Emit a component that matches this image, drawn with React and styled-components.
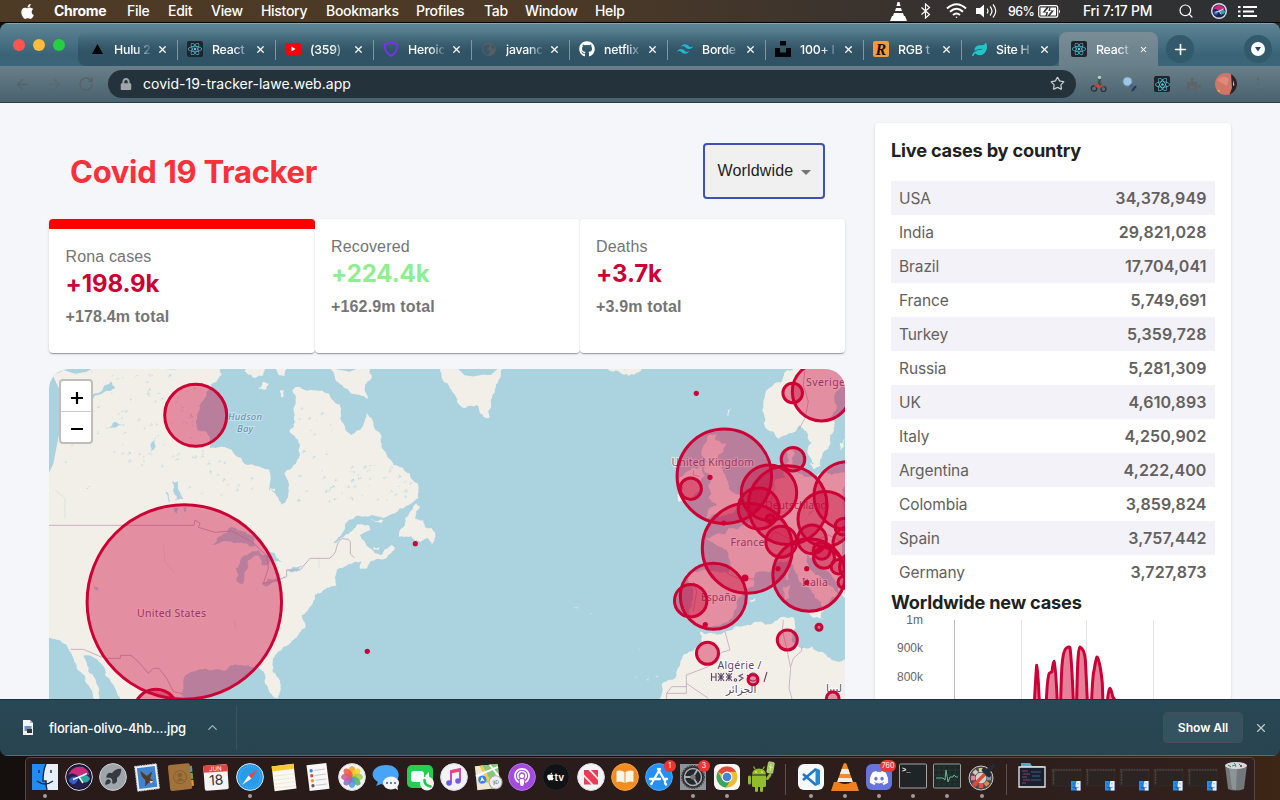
import React from "react";
import styled, { createGlobalStyle, css } from "styled-components";
import {
  FaApple, FaReact, FaGithub, FaDiscord,
  FaLock, FaLeaf, FaPuzzlePiece, FaPodcast, FaBookOpen,
} from "react-icons/fa";
import { SiTailwindcss, SiUnsplash } from "react-icons/si";
import { ArrowLeft, ArrowRight, RotateCw, Search, Star, Plus, X, ChevronUp, Rocket } from "lucide-react";

const sans = `Inter, "Liberation Sans", sans-serif`;
const helv = `"Liberation Sans", Arial, sans-serif`;

const GlobalStyle = createGlobalStyle`
  * { box-sizing: border-box; }
  body { margin: 0; background: #000; overflow: hidden; font-family: ${sans}; }
`;

const Desktop = styled.div`
  width: 1280px;
  height: 800px;
  overflow: hidden;
  display: flex;
  flex-direction: column;
  background: linear-gradient(90deg, #15100e, #0e0b0a 50%, #3d2615);
`;

/* ---------- menu bar ---------- */
const MenuBar = styled.div`
  height: 23px;
  flex: none;
  display: flex;
  align-items: center;
  color: #fff;
  font-size: 14px;
  font-weight: 500;
  letter-spacing: -0.3px;
  background: linear-gradient(90deg, #4e3b26, #4b3927 45%, #353130 75%, #2c3032);
  border-bottom: 1px solid #050607;
  padding-left: 19px;
`;
const AppleMark = styled.div`
  width: 35px;
  display: flex;
  font-size: 17px;
`;
const MenuItem = styled.span`
  width: ${(p) => p.$w}px;
  flex: none;
  white-space: nowrap;
  margin-top: -2px;
  font-weight: ${(p) => (p.$bold ? 700 : 500)};
`;
const StatusSlot = styled.div`
  width: ${(p) => p.$w}px;
  flex: none;
  display: flex;
  align-items: center;
  white-space: nowrap;
  letter-spacing: ${(p) => p.$ls || 0}px;
  font-size: ${(p) => p.$size || 14}px;
`;

/* ---------- browser window ---------- */
const Window = styled.div`
  height: 733px;
  flex: none;
  display: flex;
  flex-direction: column;
  border-radius: 8px;
  overflow: hidden;
  background: #274653;
`;
const TabStrip = styled.div`
  height: 43px;
  flex: none;
  display: flex;
  align-items: stretch;
  border-top: 1px solid #86a5b1;
  background: linear-gradient(#5d8494, #3a6377 75%, #3b6679);
`;
const Lights = styled.div`
  width: 78px;
  display: flex;
  gap: 8px;
  padding: 15px 0 0 13px;
`;
const Light = styled.span`
  width: 12px;
  height: 12px;
  border-radius: 50%;
  background: ${(p) => p.$c};
`;
const Tabs = styled.div`
  display: flex;
  padding-top: 8px;
  width: 1080px;
`;
const TabRun = styled.div`
  display: flex;
  width: 981px;
  padding-left: 2px;
  border-radius: 8px 0 8px 8px;
  background: linear-gradient(rgba(45, 80, 98, 0), #305365 60%);
`;
const Tab = styled.div`
  width: 98px;
  flex: none;
  display: flex;
  align-items: center;
  padding: 0 10px 0 9px;
  color: #fff;
  position: relative;
  ${(p) =>
    p.$active
      ? css`
          width: 99px;
          padding: 0 10px 0 12px;
          background: linear-gradient(#788d96, #697f89);
          border-radius: 8px 8px 0 0;
        `
      : css`
          &::after {
            content: "";
            position: absolute;
            right: 0;
            top: 8px;
            width: 1px;
            height: 20px;
            background: ${p.$last ? "transparent" : "#7f97a2"};
          }
        `}
`;
const Favicon = styled.span`
  width: 16px;
  height: 16px;
  flex: none;
  display: flex;
  align-items: center;
  justify-content: center;
  color: ${(p) => p.$c || "#fff"};
  background: ${(p) => p.$bg || "transparent"};
  font-size: ${(p) => p.$s || 16}px;
  border-radius: 2px;
`;
const TabTitle = styled.span`
  width: 36px;
  flex: none;
  margin: 0 7px 0 9px;
  white-space: nowrap;
  font-size: 12.3px;
  letter-spacing: -0.2px;
  font-weight: 500;
  -webkit-mask-image: linear-gradient(90deg, #000 60%, rgba(0, 0, 0, 0.15) 100%);
  mask-image: linear-gradient(90deg, #000 60%, rgba(0, 0, 0, 0.15) 100%);
`;
const RoundButton = styled.span`
  width: 28px;
  height: 28px;
  border-radius: 50%;
  margin: 11px 0 0 ${(p) => p.$ml}px;
  display: flex;
  align-items: center;
  justify-content: center;
  color: #fff;
  background: #335a6b;
`;
const Toolbar = styled.div`
  height: 37px;
  flex: none;
  display: flex;
  align-items: center;
  background: linear-gradient(#697f89, #49626e);
  border-bottom: 1px solid #263f4b;
  color: #5d686e;
`;
const NavIcon = styled.span`
  width: 32px;
  display: flex;
  padding-left: 14px;
  color: ${(p) => p.$c};
`;
const Omnibox = styled.div`
  width: 968px;
  height: 28px;
  margin-left: 12px;
  border-radius: 14px;
  background: #24333b;
  display: flex;
  align-items: center;
  padding: 0 11px 1px 12px;
  color: #fff;
  font-size: 14px;
`;
const Url = styled.span`
  flex: 1;
  margin-left: 11px;
  letter-spacing: 0.02px;
`;
const Ext = styled.span`
  width: 32px;
  flex: none;
  display: flex;
  justify-content: center;
`;
const Extensions = styled.div`
  display: flex;
  align-items: center;
  margin-left: 6px;
`;
const Avatar = styled.span`
  width: 22px;
  height: 22px;
  border-radius: 50%;
  overflow: hidden;
  display: flex;
`;

/* ---------- tracker page ---------- */
const Page = styled.main`
  height: 596px;
  flex: none;
  overflow: hidden;
  display: flex;
  align-items: flex-start;
  gap: 30px;
  padding: 20px 49px 0;
  background: #f5f6fa;
`;
const LeftColumn = styled.section`
  width: 796px;
`;
const Header = styled.header`
  height: 96px;
  display: flex;
  align-items: center;
  justify-content: space-between;
  padding: 0 20px 0 21px;
`;
const Title = styled.h1`
  margin: 2px 0 0;
  color: #fc3038;
  font: 700 31px/38px ${sans};
  letter-spacing: -0.3px;
`;
const Select = styled.div`
  width: 122px;
  height: 56px;
  border: 2px solid #3f51b5;
  border-radius: 4px;
  background: #f0f0f0;
  display: flex;
  align-items: center;
  padding-left: 12.5px;
  gap: 8px;
  color: #222;
  font: 16px ${helv};
  letter-spacing: 0.15px;
`;
const Caret = styled.span`
  border: 5px solid transparent;
  border-top-color: #757575;
  border-bottom: 0;
  margin-top: 2px;
`;
const Stats = styled.div`
  display: flex;
  height: 134px;
`;
const StatCard = styled.article`
  flex: 1;
  background: #fff;
  border-radius: 4px;
  padding: 16px;
  ${(p) => p.$selected && css`flex: 0 0 266px; padding-left: 16.5px;`}
  border-top: ${(p) => (p.$selected ? "10px solid red" : "0")};
  box-shadow: 0 2px 1px -1px rgba(0, 0, 0, 0.2), 0 1px 1px rgba(0, 0, 0, 0.14), 0 1px 3px rgba(0, 0, 0, 0.12);
`;
const StatLabel = styled.p`
  margin: 0;
  color: #757575;
  font: 16px/24px ${helv};
  letter-spacing: 0.15px;
`;
const StatValue = styled.h2`
  margin: 0;
  height: 36px;
  padding-top: 1px;
  color: ${(p) => p.$c};
  font: 700 24px/28px ${sans};
  letter-spacing: -0.1px;
`;
const StatTotal = styled.p`
  margin: 0;
  color: #757575;
  font: 700 16px/24px ${helv};
  letter-spacing: 0.15px;
`;
const MapFrame = styled.div`
  position: relative;
  margin-top: 16px;
  height: 500px;
  border-radius: 20px;
  overflow: hidden;
  background: #aad3df;
  svg { display: block; }
`;
const ZoomControl = styled.div`
  position: absolute;
  left: 10px;
  top: 10px;
  width: 34px;
  border: 2px solid #c0bebb;
  border-radius: 4px;
  background: #fff;
  overflow: hidden;
`;
const ZoomButton = styled.div`
  height: 30px;
  display: flex;
  align-items: center;
  justify-content: center;
  padding: 4px 0 0 1px;
  color: #000;
  & + & { height: 31px; border-top: 1px solid #ccc; }
`;
const SideCard = styled.aside`
  width: 356px;
  height: 700px;
  flex: none;
  background: #fff;
  border-radius: 4px;
  padding: 15px 16px;
  box-shadow: 0 2px 1px -1px rgba(0, 0, 0, 0.2), 0 1px 1px rgba(0, 0, 0, 0.14), 0 1px 3px rgba(0, 0, 0, 0.12);
`;
const SideTitle = styled.h3`
  margin: 0;
  color: #212121;
  font: 700 18.2px/24px ${sans};
  letter-spacing: -0.2px;
`;
const Table = styled.div`
  margin: 19px 0 1px;
`;
const Row = styled.div`
  height: 34px;
  display: flex;
  justify-content: space-between;
  align-items: center;
  padding: 0 9px 0 8px;
  color: #636060;
  font-size: 15.5px;
  letter-spacing: -0.1px;
  &:nth-child(odd) { background: #f3f2f8; }
  strong { font-weight: 600; font-size: 16px; letter-spacing: 0.1px; margin-right: -0.5px; }
`;

/* ---------- downloads shelf ---------- */
const Shelf = styled.div`
  flex: 1;
  display: flex;
  align-items: center;
  background: linear-gradient(#284856, #28444f);
  border-top: 1px solid #1c323c;
  border-bottom: 1px solid #49707f;
  color: #fff;
  font-weight: 500;
  padding: 2px 12px 2px 22px;
`;
const FileName = styled.span`
  width: 137px;
  flex: none;
  margin: 0 19px 0 15px;
  font-size: 13px;
  white-space: nowrap;
  letter-spacing: -0.16px;
`;
const ShelfRule = styled.span`
  width: 1px;
  height: 44px;
  margin-left: 16px;
  background: #3c535d;
`;
const ShowAll = styled.span`
  width: 80px;
  height: 31px;
  margin: 0 11px 0 auto;
  border: 1px solid #4a4e53;
  border-radius: 4px;
  background: #355260;
  display: flex;
  align-items: center;
  justify-content: center;
  font-size: 12.2px;
  font-weight: 600;
  letter-spacing: -0.1px;
`;

/* ---------- dock ---------- */
const Dock = styled.div`
  width: 1230px;
  height: 44px;
  margin: 1px 0 0 25px;
  padding-left: 2px;
  flex: none;
  display: flex;
  border: 1px solid #534847;
  border-bottom: 0;
  border-radius: 5px 5px 0 0;
  background: linear-gradient(90deg, #271a19, #2b1d1b 60%, #32201c);
`;
const DockSlot = styled.div`
  width: 34.1px;
  flex: none;
  position: relative;
  display: flex;
  flex-direction: column;
  align-items: center;
  padding-top: 5px;
  svg { display: block; overflow: visible; }
`;
const RunningDot = styled.i`
  width: 4px;
  height: 4px;
  margin-top: 3px;
  border-radius: 50%;
  background: #a19c9b;
`;
const Badge = styled.span`
  position: absolute;
  right: 0;
  top: 2px;
  min-width: 12px;
  height: 12px;
  padding: 0 2px;
  border-radius: 6px;
  background: #ec3535;
  color: #fff;
  font-size: 7px;
  line-height: 12px;
  text-align: center;
`;
const DockRule = styled.span`
  width: 1px;
  height: 31px;
  margin: 6px 8px 0 7px;
  background: #5d5250;
`;

/* ---------- map ---------- */
const random = (seed) => () => {
  seed = (seed * 16807) % 2147483647;
  return seed / 2147483647;
};

// Splits every coast segment with small offsets so that the shore looks rugged.
function coast(text, rough = 0.16) {
  let pts = text.trim().split(/\s+/).map((p) => p.split(",").map(Number));
  const rnd = random(77);
  for (let k = 0; k < 3; k++) {
    const out = [];
    pts.forEach(([x, y], i) => {
      const [nx, ny] = pts[(i + 1) % pts.length];
      const o = (rnd() - 0.5) * 2 * rough;
      out.push([x, y], [(x + nx) / 2 + (ny - y) * o, (y + ny) / 2 - (nx - x) * o]);
    });
    pts = out;
  }
  return "M" + pts.map((p) => p.map((n) => n.toFixed(1)).join(",")).join("L") + "Z";
}

const WEST_LAND = [
  "0,-20 250,-20 530,-20 530,30 515,50 490,75 470,110 455,150 457,195 480,198 495,250 540,246 570,270 600,297 650,308 670,312 672,375 690,385 710,420 722,410 730,385 718,325 740,310 762,280 765,240 750,215 733,200 750,170 745,130 742,75 760,65 800,75 850,85 885,120 885,160 900,190 920,210 945,195 965,140 985,170 1010,215 1025,270 1045,300 1075,310 1095,325 1120,360 1120,400 1080,425 1050,445 980,450 930,455 900,485 865,535 900,510 935,480 970,480 975,495 945,510 960,530 975,550 990,565 1010,570 1040,540 1050,550 1030,570 990,585 965,610 945,610 950,590 930,590 905,602 875,615 870,640 875,662 845,668 810,690 800,720 785,740 770,750 780,790 750,820 715,845 690,870 682,900 695,935 707,970 700,1000 685,995 668,965 660,930 640,905 610,900 570,898 545,915 480,910 440,920 415,945 410,985 415,1040 260,1040 215,980 180,930 150,880 115,873 130,920 160,965 185,1030 160,1030 130,960 95,910 75,860 65,840 40,825 0,810",
  "850,0 975,0 980,40 960,60 970,105 940,90 900,70 870,40",
  "1115,415 1125,425 1110,460 1135,465 1140,485 1160,490 1172,515 1160,540 1150,520 1125,530 1100,515 1062,515 1080,480 1095,440",
  "640,70 655,50 675,55 660,75", "705,75 716,75 718,95 708,97", "675,368 690,372 692,380 676,376",
  "600,0 670,0 655,30 630,40 600,20", "685,0 730,0 720,35 700,30", "975,460 1015,465 1010,476 990,470", "985,545 1005,548 1000,556 985,553",
];
const EAST_LAND = [
  "-10,0 180,0 165,40 150,80 138,120 135,155 125,160 105,145 95,120 60,130 30,90 10,60 -10,30",
  "485,0 490,14 520,18 550,32 580,22 592,0",
  "1060,0 1010,50 985,60 960,90 958,150 970,195 1000,222 1040,205 1065,180 1085,200 1090,270 1110,305 1130,280 1150,250 1165,200 1160,160 1175,130 1168,90 1190,65 1230,60 1230,0",
  "1185,235 1198,222 1198,245 1186,256", "850,135 858,128 852,155 846,150", "1095,295 1125,285 1128,305 1105,312",
  "790,210 820,200 812,225 843,235 835,260 815,285 830,310 850,350 860,380 885,390 893,405 880,430 850,445 800,450 775,465 790,435 815,420 790,400 800,385 790,360 800,340 780,320 785,290 770,270 775,240",
  "740,310 770,305 780,330 765,350 768,380 745,395 700,410 697,390 715,370 700,350 715,330",
  "1040,240 1050,265 1040,300 1060,325 1090,335 1130,325 1160,330 1230,320 1230,800 1200,700 1180,660 1150,620 1110,580 1085,570 1085,590 1110,630 1150,660 1185,700 1160,695 1145,730 1130,745 1128,710 1100,680 1070,655 1050,620 1035,590 1000,590 975,620 940,620 925,640 925,665 900,680 880,700 875,730 850,770 800,785 775,790 740,765 732,740 745,700 730,650 720,630 760,620 850,625 852,580 845,555 800,530 780,520 800,515 840,510 850,490 900,480 940,440 960,400 990,345 1020,340 1030,290 1025,260",
  "1015,665 1035,660 1035,700 1018,705", "1022,620 1034,612 1033,645 1022,645", "1080,735 1128,738 1133,765 1100,755",
  "915,705 930,700 932,708 918,712",
  "765,800 790,805 840,800 870,785 930,770 990,768 1045,757 1050,790 1040,825 1070,850 1130,860 1160,885 1230,905 1230,1040 600,1040 650,960 690,940 705,900 715,870 750,850 770,830",
  "605,945 612,935 610,948", "632,935 640,925 638,938", "384,728 400,724 398,731", "432,744 444,744 440,748", "578,850 586,852 582,855", "570,935 574,935 573,944",
];
const WEST_LAKES = [
  "500,540 520,515 560,485 600,500 630,515 630,545 600,535 560,530",
  "575,650 572,610 590,575 620,560 640,555 675,575 670,600 650,600 640,570 610,585 600,620 595,655",
  "650,655 670,640 700,640 720,635 700,650 665,665", "655,545 690,565 710,590 690,590 670,570",
  "725,615 745,605 772,600 760,618 735,622", "380,350 400,350 415,400 400,405 385,380", "385,425 400,428 398,448 388,440", "362,375 370,385 378,410 370,410",
  "145,655 160,670 160,682 148,670", "310,270 318,235 332,215 330,250", "180,190 210,170 240,180 205,188", "140,90 180,60 200,50 210,70 160,90 140,105",
  "415,425 425,427 424,445 418,440", "120,372 135,360 128,372",
];

function lakes(seed, count, x0, y0, w, h) {
  const r = random(seed);
  return Array.from({ length: count }, (_, i) => {
    const x = x0 + r() * w, y = y0 + r() * h, a = 2 + r() * 8, b = 1 + r() * 4;
    return <path key={i} d={coast(`${x},${y} ${x + a},${y - b} ${x + a + b},${y + 1} ${x + a * 0.4},${y + b}`, 0.5)} />;
  });
}

const CIRCLES = [
  [195.7, 415.3, 31], [184.3, 602, 97.2], [156, 711, 21.8], [792.7, 393, 9.8], [821.5, 391.7, 29.2], [724.3, 476.3, 47.2],
  [690.7, 488.7, 10.7], [793, 459.2, 11.8], [769, 492.7, 27.7], [787.7, 505.2, 39.4], [758.7, 508.5, 20.5], [770.3, 518.7, 4],
  [747.3, 548.2, 45], [848, 495.7, 34], [825.5, 519, 27.5], [781.3, 541.7, 15.5], [812, 539.4, 14.3], [821.7, 550.7, 8.5],
  [824, 557.7, 10.5], [843.3, 526.7, 8.3], [850, 543.3, 17], [838.3, 566.7, 7.2], [853, 567, 13.5], [844, 582.3, 6],
  [809, 575, 36.2], [745, 578, 2], [713.3, 596.3, 33], [690.7, 600.7, 16.2], [707.5, 653.3, 11], [787.3, 640, 10],
  [819, 627.3, 3], [753, 679.7, 5], [832.7, 698.3, 6.3],
];
const DOTS = [
  [415.3, 543.7], [367.3, 651.3], [696.3, 393.3], [710, 477.3], [723.7, 523], [778, 568.7], [806.7, 568.7], [806.7, 582.7], [705.3, 624.7], [745, 578],
];
const LABELS = [
  ["United States", 137, 617, 69], ["United Kingdom", 671.5, 466, 82.5], ["Sverige", 806, 386, 39], ["Deutschland", 765, 509, 62],
  ["France", 730.5, 546, 34], ["España", 701, 601, 35.5], ["Italia", 802, 586, 26],
];

function WorldMap() {
  return (
    <svg width="796" height="500" viewBox="49 369 796 500">
      <g transform="translate(45 365) scale(.33333)" fill="#f2efe9">
        {WEST_LAND.map((d, i) => <path key={i} d={coast(d)} />)}
        <g fill="#aad3df">
          {WEST_LAKES.map((d, i) => <path key={i} d={coast(d)} />)}
          {lakes(11, 45, 200, 25, 270, 300)}
          {lakes(45, 18, 60, 70, 240, 240)}
          {lakes(23, 26, 380, 270, 240, 150)}
          {lakes(91, 48, 755, 300, 340, 110)}
          {lakes(32, 12, 760, 130, 110, 150)}
          {lakes(8, 18, 15, 15, 330, 80)}
        </g>
        <g fill="none" stroke="#bfa5bd" strokeWidth="2.6" strokeLinejoin="round">
          <path d="M0 481H447L450 465L465 475L460 487L510 502L560 498L620 530L665 572L670 610L655 655L685 650L725 635V615H765L795 580H853Q872 570 875 545Q885 515 900 522Q912 520 916 530V567L928 578" />
          <path d="M77 853H115L167 875L185 880H226V871H258L280 890L310 925L325 910H342L365 940L385 980L413 986" />
          <path d="M355 540L360 590L390 626M568 762L572 790M30 375L60 400V460M822 582V610" stroke="#d5dcdb" strokeWidth="2" />
        </g>
      </g>
      <g transform="translate(445 365) scale(.33333)" fill="#f2efe9">
        {EAST_LAND.map((d, i) => <path key={i} d={coast(d, 0.18)} />)}
        <g fill="none" stroke="#bfa5bd" strokeWidth="2.4">
          <path d="M1080 12L1075 60L1090 110L1080 160L1062 192M840 800L855 855L830 862L790 905L724 930V985H665V1005M724 955L790 1000M665 985L680 965H724" />
          <path d="M1015 765L1012 795L1025 850L1037 910L1032 970L1042 1005M1070 845V858L1045 880L1037 905" />
          <path d="M845 625L880 640L925 642M745 650L755 680L745 740M745 315V330L765 335M960 540L990 500L1030 520L1050 560M1090 450L1120 420L1150 450M1100 530L1150 510L1190 530M1160 540L1190 580M900 440L960 470L975 500M990 360L975 420" />
        </g>
      </g>
      <g fontFamily='"Noto Sans", sans-serif' fontSize="10.5" fill="#7b5a81" stroke="#fff" strokeOpacity=".65" strokeWidth="2" paintOrder="stroke">
        {LABELS.map(([t, x, y, w]) => <text key={t} x={x} y={y} textLength={w}>{t}</text>)}
        <g fill="#5c8ab4" fontSize="9.5" fontStyle="italic" strokeOpacity=".35">
          <text x="228" y="420" textLength="34">Hudson</text>
          <text x="237" y="432" textLength="16">Bay</text>
        </g>
        <g fill="#5f4668" strokeOpacity=".9">
          <text x="717.5" y="668.5" textLength="44">Algérie /</text>
          <g fill="none" stroke="#5f4668" strokeWidth="1.1" strokeOpacity="1">
            <path d="M711.5 673V681M716 673V681M711.5 677H716M718 673L724 681M724 673L718 681M721 673V681M718 677H724M726 673L732 681M732 673L726 681M729 673V681M726 677H732M743 674L739 676L743 678L739 681M747 675L750 678M764 682L767 672" />
            <circle cx="735.5" cy="680" r="1.2" />
            <circle cx="753" cy="677" r="4" />
          </g>
          <text x="726" y="692.5" fontFamily='"DejaVu Sans"'>الجزائر</text>
          <text x="826" y="692" fontFamily='"DejaVu Sans"'>ليبيا</text>
        </g>
      </g>
      <g fill="#cc0034" fillOpacity=".4" stroke="#cc0034" strokeWidth="3">
        {CIRCLES.map(([x, y, r], i) => <circle key={i} cx={x} cy={y} r={r} />)}
      </g>
      <g fill="#cc0034">
        {DOTS.map(([x, y], i) => <circle key={i} cx={x} cy={y} r="2.6" />)}
      </g>
    </svg>
  );
}

const ChartSvg = styled.svg`
  display: block;
`;

function CasesChart() {
  return (
    <ChartSvg width="324" height="96" viewBox="891 614 324 96">
      <g stroke="#e4e4e4">
        <path d="M954.5 620V710" stroke="#bcbcbc" />
        <path d="M1021.5 620V710M1086.5 620V710M1153.5 620V710" />
      </g>
      <g fontFamily={helv} fontSize="12" fill="#666" textAnchor="end">
        <text x="923" y="624">1m</text>
        <text x="923" y="652">900k</text>
        <text x="923" y="681">800k</text>
      </g>
      <g transform="translate(860 400) scale(.33333)" fill="#e5809a" stroke="#cc0034" strokeWidth="9" strokeLinejoin="round">
        <path d="M521 950Q527 830 530 796Q534 800 540 950M557 950Q561 830 568 820L576 815Q579 785 582 784Q587 790 594 950M601 950C604 800 606 755 618 745Q627 738 630 743C636 790 638 850 642 950M649 950C652 790 654 745 660 741C668 745 674 755 676 780Q680 850 684 950M693 950Q697 830 702 812Q708 775 711 771C718 780 724 820 727 850L730 950M739 950Q744 865 750 865Q754 868 758 890L768 905" />
      </g>
    </ChartSvg>
  );
}

/* ---------- dock drawings, each on a 28 by 28 grid ---------- */
const Face = ({ s = 26 }) => (
  <svg width={s} height={s} viewBox="0 0 26 26">
    <path fill="#1f8df5" d="M0 0h26v26H0z" />
    <path fill="#e9eff6" d="M14 0h12v26H15q-1-5-1-9h-3Q11 7 14 0z" />
    <path fill="none" stroke="#182b44" strokeWidth="1.4" d="M7 6v3M19 6v3M5 17q8 6 16 0M14 0q-3 7-3 17h3q0 5 1 9" />
  </svg>
);
const Disc = ({ fill, ring = "#d8dbe0", children }) => (
  <svg width="28" height="28" viewBox="0 0 28 28">
    <circle cx="14" cy="14" r="13.4" fill={fill} stroke={ring} strokeWidth="1" />
    {children}
  </svg>
);
const Board = ({ children, turn = 0 }) => (
  <svg width="28" height="28" viewBox="0 0 28 28"><g transform={`rotate(${turn} 14 14)`}>{children}</g></svg>
);

const SiriSwirl = () => (
  <>
    <circle cx="14" cy="14" r="11.5" fill="#25204d" />
    <path d="M3 12Q8 2 18 4Q24 8 24 12Q18 9 14 14Q8 8 3 12z" fill="#c92b78" />
    <path d="M14 14Q22 9 25 16Q20 24 14 14z" fill="#2dbfb4" fillOpacity=".85" />
    <path d="M14 14Q5 12 4 18Q10 26 14 14z" fill="#376ce0" fillOpacity=".85" />
    <path d="M8 16.500Q14 14 22 10.500M14 14L18 20" stroke="#e6f7ff" strokeWidth="1.600" fill="none" />
  </>
);
const MiniWindow = () => (
  <svg width="30" height="28" viewBox="0 0 30 28">
    <path fill="#2c2422" stroke="#38302e" strokeWidth=".6" d="M1 6h29v17H1z" />
    <path stroke="#4c4442" strokeWidth="1.600" strokeDasharray="2 .7" d="M1 7h29M2.500 8v14" />
    <g transform="translate(20 18)"><Face s={9.5} /></g>
  </svg>
);
const petals = ["#f6a323", "#f5d32c", "#a9cf46", "#55b46a", "#4e9ed5", "#8b70c4", "#cf5a9c", "#ed5b4b"];
const ticks = ["#cfcf9a", "#8fae8a", "#7f9a98", "#e08a50", "#e05050", "#d9487a", "#e3809a", "#d8c8b8"];

const DOCK = [
  { key: "finder", run: 1, art: <Board><g transform="translate(1 1)"><Face /></g></Board> },
  { key: "siri", art: <Disc fill="#15152c"><SiriSwirl /></Disc> },
  { key: "launchpad", art: <Disc fill="#9fa6ab" ring="#c8ced1"><g transform="translate(5 5)"><Rocket size={18} color="#363b40" fill="#363b40" /></g></Disc> },
  { key: "mail", art: <Board turn={-7}><path fill="#eef2f5" d="M3 2h22v25H3z" stroke="#ccc" strokeDasharray="1.500 1" /><path fill="#4084cf" d="M5 4h18v21H5z" /><path fill="#583922" d="M8 7l6 6 6-4-3 7 3 3-5 1-4 3 1-6-3-4z" /><path fill="#e8dfc9" d="M16 18l4 1-3 2z" /></Board> },
  { key: "contacts", art: <Board turn={-6}><path fill="#4aa0c0" d="M20 4h6v6h-6z" /><path fill="#65ac49" d="M20 11h6v6h-6z" /><path fill="#df9a33" d="M20 18h6v6h-6z" /><rect x="2" y="1" width="22" height="26" rx="2" fill="#a2723c" /><circle cx="13" cy="14" r="6.500" fill="none" stroke="#86602f" /><circle cx="13" cy="12" r="2.400" fill="#86602f" /><path d="M9 18q4-6 8 0z" fill="#86602f" /></Board> },
  { key: "calendar", art: <Board turn={-4}><rect x="2" y="2" width="24" height="25" rx="2" fill="#f5f5f5" /><path fill="#e4433f" d="M2 2h24v7H2z" /><text x="14" y="7.800" fill="#fff" fontSize="6" textAnchor="middle">JUN</text><text x="14" y="22" fill="#333" fontSize="14" textAnchor="middle">18</text></Board> },
  { key: "safari", run: 1, art: <Disc fill="#279cea" ring="#dfe4e8"><circle cx="14" cy="14" r="10.500" fill="none" stroke="#7fcaf6" strokeDasharray=".6 1.500" /><path fill="#f0443a" d="M22 6L15.500 15.500 12.500 12.500z" /><path fill="#f3f3f3" d="M6 22L15.500 15.500 12.500 12.500z" /></Disc> },
  { key: "notes", art: <Board turn={-7}><path fill="#faf8ef" d="M3 2h22v25H3z" /><path fill="#f7ca35" d="M3 2h22v5H3z" /><path stroke="#e6e3d8" strokeWidth=".7" d="M3 12h22M3 16h22M3 20h22M3 24h22" /></Board> },
  { key: "reminders", art: <Board turn={-7}><path fill="#f7f7f7" d="M4 1h20v26H4z" /><path stroke="#c8c8c8" d="M11 7h11M11 12h11M11 17h11M11 22h11" /><circle cx="8" cy="7" r="1.700" fill="#3984ef" /><circle cx="8" cy="12" r="1.700" fill="#e9493e" /><circle cx="8" cy="17" r="1.700" fill="#f39b36" /><circle cx="8" cy="22" r="1.700" fill="#675a5c" /></Board> },
  { key: "photos", art: <Disc fill="#f3f3f2">{petals.map((c, i) => <ellipse key={c} cx="14" cy="8.500" rx="3.500" ry="5.500" fill={c} fillOpacity=".88" transform={`rotate(${i * 45} 14 14)`} />)}</Disc> },
  { key: "messages", art: <Board><path fill="#48a4f7" d="M14 2c17 0 17 20 0 20q-3 0-5-1l-5 2 2-4C-4 13 1 2 14 2z" /><ellipse cx="19" cy="20" rx="8" ry="6.500" fill="#f1f5f9" /><path fill="#f1f5f9" d="M21 24l5 3-1-6z" /><path stroke="#345d91" strokeWidth="2" strokeLinecap="round" strokeDasharray="0 4" d="M15 20h9" /></Board> },
  { key: "facetime", art: <Board><rect x="1" y="2" width="26" height="23" rx="5" fill="#25ce50" /><rect x="5" y="8" width="13" height="11" rx="3" fill="#fff" /><path fill="#fff" d="M19 13l4-4v9z" /><circle cx="21" cy="20.500" r="7" fill="#f2f5f2" /><path d="M18.500 17q0 5.500 6 6.500" stroke="#2bc254" strokeWidth="2.600" fill="none" strokeLinecap="round" /></Board> },
  { key: "music", art: <Disc fill="#f3f3f6"><g fill="none" stroke="#c352c0" strokeWidth="2"><path d="M11 20V8l9-2v12" /><circle cx="9" cy="20" r="1.800" fill="#665de5" stroke="#665de5" /><circle cx="18" cy="18" r="1.800" fill="#765de5" stroke="#765de5" /><path d="M11 9l9-2" stroke="#ed476e" strokeWidth="3" /></g></Disc> },
  { key: "maps", art: <Board turn={-6}><path fill="#eee7d2" d="M2 2h23v24H2z" /><path fill="#83c97b" d="M10 2h15v8L12 20z" /><path stroke="#f8c852" strokeWidth="3" d="M8 2l10 24" /><path stroke="#fff" strokeWidth="2" d="M2 12l23-7M17 2l8 13" /><circle cx="8" cy="16" r="4" fill="#3a7fe0" /><path fill="#fff" d="M8 13l2.300 5L8 17l-2.300 1z" /><circle cx="21" cy="20" r="6.500" fill="#eef0f0" stroke="#aaa" /><text x="21" y="22" textAnchor="middle" fontSize="5" fill="#444">3D</text></Board> },
  { key: "podcasts", art: <Disc fill="#a34ae0" ring="#bb70ee"><foreignObject x="5" y="5" width="18" height="18"><FaPodcast size={18} color="#fff" /></foreignObject></Disc> },
  { key: "tv", art: <Disc fill="#111214" ring="#26282a"><foreignObject x="4" y="8.500" width="9" height="10"><FaApple size={9} color="#fff" /></foreignObject><text x="12.500" y="17.500" fontSize="10" fontWeight="600" fill="#fff">tv</text></Disc> },
  { key: "news", art: <Disc fill="#f3f4f6"><path fill="#ef3c56" d="M7 7h4.500L21 17v4.500h-4.500L7 11.500zM7 14l7.500 7.500H7zM14 7h7v7.500z" /></Disc> },
  { key: "books", art: <Disc fill="#f28d20" ring="#f6a144"><path fill="#fbf5e9" d="M5.500 8Q10 6.500 13.500 9v11Q10 17.500 5.500 19zM22.500 8Q18 6.500 14.500 9v11q3.500-2.500 8-1z" /></Disc> },
  { key: "appstore", badge: "1", art: <Disc fill="#2590f3" ring="#4da8f6"><path fill="none" stroke="#fff" strokeWidth="2.300" strokeLinecap="round" d="M15 6L8 18M13 6l7 12M5 16h10M19 16h3M7 20l-.7 1M20 20l1 1.500" /></Disc> },
  { key: "settings", badge: "3", run: 1, art: <Board><path fill="#8c949a" d="M1 1h26v26H1z" /><circle cx="14" cy="14" r="11" fill="#25282a" stroke="#444" strokeWidth="2" strokeDasharray="1.500 1" /><circle cx="14" cy="14" r="8.500" fill="none" stroke="#a8adb0" strokeWidth="1.500" /><path stroke="#a8adb0" strokeWidth="1.800" d="M14 14H5.500M14 14l4.500 7.500M14 14l4.500-7.500" /><circle cx="14" cy="14" r="2.600" fill="#777" /></Board> },
  { key: "chrome", run: 1, art: <Board><rect x="1" y="1" width="26" height="26" rx="6" fill="#f7f7f7" /><circle cx="14" cy="14" r="10.500" fill="#edbd35" /><path fill="#de4b3c" d="M14 14L4.900 8.800A10.500 10.500 0 0 1 23.100 8.800L14 9z" /><path fill="#3ca45c" d="M4.900 8.800A10.500 10.500 0 0 0 13 24.400l5-8-8.500.5z" /><circle cx="14" cy="14" r="5.400" fill="#fff" /><circle cx="14" cy="14" r="4.300" fill="#4285d8" /></Board> },
  { key: "android", art: <Board><g fill="#91bd2c"><path d="M5 11.500q.5-6 7-6t7 6z" /><path d="M5 12.500h14v10q0 1.500-1.500 1.500h-11Q5 24 5 22.500z" /><rect x="1" y="12.500" width="3" height="9" rx="1.500" /><rect x="8" y="22" width="3" height="7" rx="1.500" /><rect x="13" y="22" width="3" height="7" rx="1.500" /></g><path d="M8 6L6.500 3.500M16 6l1.500-2.500M20.500 15l3-3.500" stroke="#91bd2c" strokeWidth="1.200" /><path d="M20.500 15.500l2.500-3.500" stroke="#91bd2c" strokeWidth="3" strokeLinecap="round" /><circle cx="9" cy="9" r=".8" fill="#fff" /><circle cx="15" cy="9" r=".8" fill="#fff" /><rect x="20.500" y="-1" width="6" height="11" rx="1" transform="rotate(10 23 5)" fill="#a4c75b" stroke="#d9e7af" strokeWidth=".6" /><path d="M24 1l-1 7M22 3l2 2 2-1" stroke="#e6f0c8" fill="none" strokeWidth=".8" /></Board> },
  { key: "rule1", rule: 1 },
  { key: "code", run: 1, art: <Board><rect x="1" y="1" width="26" height="26" rx="6" fill="#f8f9fa" /><path fill="#2489d4" d="M18.500 5L23 7v14l-4.500 2z" /><path fill="none" stroke="#1f78c6" strokeWidth="2.600" strokeLinejoin="round" d="M19 6L6 17M19 22L6 11" /></Board> },
  { key: "vlc", run: 1, art: <Board><path fill="#f18b25" d="M12.500 1q1.500-2 3 0l6.500 18H6z" /><path fill="#f1eee9" d="M10.700 6h6.600l1.700 5H9zM7.500 15h13l1.200 4H6.300z" /><path fill="#ee7f1c" d="M3 19h4q7 4 14 0h4l3 9H0z" /></Board> },
  { key: "discord", badge: "760", run: 1, art: <Board><rect x="1" y="1" width="26" height="26" rx="6" fill="#6674dc" /><foreignObject x="4" y="5" width="21" height="20"><FaDiscord size={20} color="#fff" /></foreignObject></Board> },
  { key: "terminal", run: 1, art: <Board><rect x=".5" y="1" width="27" height="24" rx="1" fill="#212426" stroke="#a3a5a5" /><text x="3" y="9" fontSize="7" fontFamily="Liberation Mono" fontWeight="700" fill="#fff">&gt;_</text></Board> },
  { key: "activity", run: 1, art: <Board><rect x=".5" y="1" width="27" height="24" rx="1" fill="#1c2a27" stroke="#9b9d9d" /><path stroke="#31473f" strokeWidth=".5" d="M1 7h26M1 12h26M1 17h26M1 21h26M6 1v24M11 1v24M17 1v24M22 1v24" /><path fill="none" stroke="#62b894" d="M3 15h7l2 2 1-10 2 12 2-5h3l1-2 2 2h2" /></Board> },
  { key: "picker", run: 1, art: <Board><circle cx="13" cy="15" r="12" fill="#4a4a48" stroke="#c9c9c9" />{ticks.map((c, i) => <path key={c} stroke={c} strokeWidth="4.500" d="M13 5v4" transform={`rotate(${i * 45} 13 15)`} />)}<circle cx="13" cy="15" r="5.500" fill="#cfcfcf" /><path stroke="#e24832" strokeWidth="3.200" strokeLinecap="round" d="M6 22L17 11" /><path stroke="#202a3a" strokeWidth="4.500" strokeLinecap="round" d="M19 9l6-6M16 7l5 5" /></Board> },
  { key: "rule2", rule: 1 },
  { key: "folder", art: <Board><path fill="#5fa6c5" d="M3 0h9l2 3h11v5H3z" /><path fill="#19202e" stroke="#ececec" strokeWidth="1.300" d="M1 4h26v20H1z" /><path stroke="#8a4267" d="M4 8h6M5 11h7M4 14h5M5 17h7M4 20h4" /><path stroke="#3e5f85" d="M13 9h10M14 13h8M13 17h10" /></Board> },
  ...[1, 2, 3, 4, 5].map((n) => ({ key: "window" + n, art: <MiniWindow /> })),
  { key: "trash", art: <Board><path fill="#72787b" d="M3 2h22l-3 24q-8 3-16 0z" /><path fill="#a2a6a7" d="M7 4l3 22 4 1 1-23z" fillOpacity=".6" /><ellipse cx="14" cy="2.500" rx="11" ry="3.500" fill="#d5dada" /><path stroke="#2f8e94" strokeWidth="1" d="M10 3l3-1 1 2" fill="none" /><path stroke="#5a6063" d="M6 2l3 2M17 1l3 3M20 2l-2 2" /><path stroke="#c6564a" d="M12 0l2 2" /></Board> },
];

const MENUS = [["Chrome", 73, 1], ["File", 41], ["Edit", 43], ["View", 50], ["History", 65], ["Bookmarks", 90], ["Profiles", 68], ["Tab", 41], ["Window", 70], ["Help", 295]];

const TABS = [
  ["Hulu 2", <Favicon><svg width="11" height="10"><path d="M5.500 0L11 10H0z" fill="#050505" /></svg></Favicon>],
  ["React", <Favicon $bg="#20242b" $c="#58c4dc" $s={14}><FaReact /></Favicon>],
  ["(359)", <Favicon><svg width="16" height="12"><rect width="16" height="12" rx="2.500" fill="red" /><path d="M6.500 3.500v5l4-2.500z" fill="#fff" /></svg></Favicon>],
  ["Heroic", <Favicon $c="#7c2ff2"><svg width="18" height="18" viewBox="0 0 18 18"><path d="M9 1.200Q12.500 3.600 16 3.800Q17 12.500 9 16.800Q1 12.500 2 3.800Q5.500 3.600 9 1.200z" fill="none" stroke="currentColor" strokeWidth="2" /></svg></Favicon>],
  ["javanc", <Favicon><svg width="14" height="14"><circle cx="7" cy="7" r="7" fill="#555e63" /><path d="M2 4q4-3 6 0l-3 3 3 2-2 4q-5-1-5-7zM10 2l3 4-3 1z" fill="#39576a" /></svg></Favicon>],
  ["netflix", <Favicon><FaGithub /></Favicon>],
  ["Borde", <Favicon $c="#25b5d3"><SiTailwindcss /></Favicon>],
  ["100+ I", <Favicon $c="#050505"><SiUnsplash /></Favicon>],
  ["RGB t", <Favicon $bg="#fb9a35" $c="#111"><svg width="16" height="16"><text x="2.500" y="13.500" fontFamily="Liberation Serif" fontSize="16" fontWeight="700" fontStyle="italic" fill="#111">R</text></svg></Favicon>],
  ["Site H", <Favicon $c="#21c6c8" $s={15}><FaLeaf /></Favicon>],
];

const COUNTRIES = [
  ["USA", "34,378,949"], ["India", "29,821,028"], ["Brazil", "17,704,041"], ["France", "5,749,691"], ["Turkey", "5,359,728"], ["Russia", "5,281,309"],
  ["UK", "4,610,893"], ["Italy", "4,250,902"], ["Argentina", "4,222,400"], ["Colombia", "3,859,824"], ["Spain", "3,757,442"], ["Germany", "3,727,873"],
];

const STATS = [
  ["Rona cases", "+198.9k", "+178.4m total", "#cc0034", true],
  ["Recovered", "+224.4k", "+162.9m total", "lightgreen"],
  ["Deaths", "+3.7k", "+3.9m total", "#cc0034"],
];

function SystemBar() {
  return (
    <MenuBar>
      <AppleMark><FaApple /></AppleMark>
      {MENUS.map(([t, w, b]) => <MenuItem key={t} $w={w} $bold={b}>{t}</MenuItem>)}
      <StatusSlot $w={30}>
        <svg width="17" height="19" viewBox="0 0 17 19"><path fill="#fff" d="M7.500 0h2l1 4h-4zM6 6h5l1 3H5zM4 11h9l1 3H3zM2 14h13l2 5H0z" /></svg>
      </StatusSlot>
      <StatusSlot $w={26}>
        <svg width="12" height="16" viewBox="0 0 12 16"><path d="M1.500 4.500l8 7-4 3.500V1l4 3.500-8 7" fill="none" stroke="#fff" strokeWidth="1.200" /></svg>
      </StatusSlot>
      <StatusSlot $w={30}>
        <svg width="21" height="16" viewBox="0 0 21 16" fill="none" stroke="#fff" strokeWidth="2"><path d="M1 5.500q9.500-8.500 19 0M4 8.800q6.500-6 13 0M7 12q3.500-3 7 0" /><circle cx="10.500" cy="14.300" r=".8" fill="#fff" stroke="none" /></svg>
      </StatusSlot>
      <StatusSlot $w={32}>
        <svg width="22" height="16" viewBox="0 0 22 16"><path fill="#fff" d="M0 5h4l4-3.500v13L4 11H0z" /><path fill="none" stroke="#fff" strokeWidth="1.200" d="M11 5.500q2 2.500 0 5M14 3.500q4 4.500 0 9M17 1.500q5.500 6.500 0 13" /></svg>
      </StatusSlot>
      <StatusSlot $w={30} $size={12.4} $ls={-0.5}>96%</StatusSlot>
      <StatusSlot $w={45}>
        <svg width="23" height="13" viewBox="0 0 23 13"><rect x=".7" y=".7" width="19" height="11.500" rx="2" fill="none" stroke="#fff" strokeWidth="1.200" /><path fill="#fff" d="M2.500 2.500h6l-4 5h4l-1 3h-5zM12.500 2.500h5.500v8h-6l4-5h-4zM21 4.500q2 2 0 4z" /><path d="M11.500 1.500L7 7h3l-1 4.500L13.500 6h-3z" fill="#fff" /></svg>
      </StatusSlot>
      <StatusSlot $w={95} $size={13.8} $ls={-0.15}>Fri 7:17 PM</StatusSlot>
      <StatusSlot $w={33}><Search size={16} strokeWidth={1.8} /></StatusSlot>
      <StatusSlot $w={27}><svg width="16" height="16" viewBox="0 0 28 28"><circle cx="14" cy="14" r="14" fill="#d6dff1" /><SiriSwirl /></svg></StatusSlot>
      <StatusSlot $w={20}><svg width="19" height="13"><path stroke="#fff" strokeWidth="2" d="M0 2h2.500M5 2h14M0 6.500h2.500M5 6.500h11M0 11h2.500M5 11h14" /></svg></StatusSlot>
    </MenuBar>
  );
}

function BrowserTabs() {
  return (
    <TabStrip>
      <Lights><Light $c="#ff5550" /><Light $c="#febc3b" /><Light $c="#27ce41" /></Lights>
      <Tabs>
        <TabRun>
          {TABS.map(([t, icon], i) => (
            <Tab key={t} $last={i === 9}>{icon}<TabTitle>{t}</TabTitle><X size={13} strokeWidth={2.8} /></Tab>
          ))}
        </TabRun>
        <Tab $active><Favicon $bg="#20242b" $c="#58c4dc" $s={14}><FaReact /></Favicon><TabTitle>React</TabTitle><X size={13} strokeWidth={2.8} /></Tab>
      </Tabs>
      <RoundButton $ml={8}><Plus size={17} strokeWidth={2.3} /></RoundButton>
      <RoundButton $ml={50}>
        <svg width="14" height="14"><circle cx="7" cy="7" r="7" fill="#fff" /><path d="M4 5h6l-3 4.500z" fill="#294c5c" /></svg>
      </RoundButton>
    </TabStrip>
  );
}

function AddressBar() {
  return (
    <Toolbar>
      <NavIcon $c="#566268"><ArrowLeft size={17} /></NavIcon>
      <NavIcon $c="#596970"><ArrowRight size={17} /></NavIcon>
      <NavIcon $c="#566268"><RotateCw size={16} /></NavIcon>
      <Omnibox>
        <FaLock size={12} color="#a1a6ab" />
        <Url>covid-19-tracker-lawe.web.app</Url>
        <Star size={15} color="#c6cbce" />
      </Omnibox>
      <Extensions>
        <Ext>
          <svg width="17" height="18" viewBox="0 0 17 18"><circle cx="4" cy="13.500" r="2.700" fill="none" stroke="#2b3032" strokeWidth="1.200" /><circle cx="13.500" cy="14" r="2.500" fill="none" stroke="#2b3032" strokeWidth="1.200" /><path d="M4 11l4-3 6 4-6 1z" fill="#c9443a" /><path d="M8 3l2 1-1 4 2 2" stroke="#344f46" strokeWidth="2.300" fill="none" /><circle cx="9.500" cy="2.500" r="1.800" fill="#b6cbbb" /></svg>
        </Ext>
        <Ext>
          <svg width="16" height="17"><circle cx="5.500" cy="5.500" r="4.500" fill="#9fc6e6" stroke="#7192ab" /><path d="M8 9l6 5" stroke="#4b6585" strokeWidth="4" /><path d="M10 15l4-5" stroke="#26374c" strokeWidth="2" /></svg>
        </Ext>
        <Ext><Favicon $bg="#20242b" $c="#58c4dc" $s={15}><FaReact /></Favicon></Ext>
        <Ext><FaPuzzlePiece size={14} color="#606466" /></Ext>
        <Ext>
          <Avatar>
            <svg width="22" height="22"><path fill="#cf7668" d="M0 0h22v22H0z" /><path fill="#dc8b78" d="M2 7Q8 1 14 6L12 13Q6 10 2 7z" /><path fill="#262329" d="M16 0l6 3v17l-8 3 3-8z" /><path fill="#bcc4c9" d="M18 7l1.500 5-1.500 1z" /><circle cx="3.500" cy="18" r="1.600" fill="#e9a83d" /></svg>
          </Avatar>
        </Ext>
        <Ext><svg width="4" height="14" fill="#5d686c"><circle cx="2" cy="2" r="1.400" /><circle cx="2" cy="7" r="1.400" /><circle cx="2" cy="12" r="1.400" /></svg></Ext>
      </Extensions>
    </Toolbar>
  );
}

export default function App() {
  return (
    <Desktop>
      <GlobalStyle />
      <SystemBar />
      <Window>
        <BrowserTabs />
        <AddressBar />
        <Page>
          <LeftColumn>
            <Header>
              <Title>Covid 19 Tracker</Title>
              <Select>Worldwide<Caret /></Select>
            </Header>
            <Stats>
              {STATS.map(([label, value, total, color, selected]) => (
                <StatCard key={label} $selected={selected}>
                  <StatLabel>{label}</StatLabel>
                  <StatValue $c={color}>{value}</StatValue>
                  <StatTotal>{total}</StatTotal>
                </StatCard>
              ))}
            </Stats>
            <MapFrame>
              <WorldMap />
              <ZoomControl>
                <ZoomButton><svg width="14" height="14"><path d="M1 7h12M7 1v12" stroke="#000" strokeWidth="2.200" /></svg></ZoomButton>
                <ZoomButton><svg width="14" height="14"><path d="M1 7h12" stroke="#000" strokeWidth="2.200" /></svg></ZoomButton>
              </ZoomControl>
            </MapFrame>
          </LeftColumn>
          <SideCard>
            <SideTitle>Live cases by country</SideTitle>
            <Table>
              {COUNTRIES.map(([name, n]) => <Row key={name}>{name}<strong>{n}</strong></Row>)}
            </Table>
            <SideTitle>Worldwide new cases</SideTitle>
            <CasesChart />
          </SideCard>
        </Page>
        <Shelf>
          <svg width="12" height="15" viewBox="0 0 12 15"><path fill="#f2f4f5" d="M1 0h7l3 3v12H1z" /><path fill="#b3bac0" d="M8 0v3h3z" /><path fill="#6d8fbc" d="M2.500 6h7v5h-7z" /><path fill="#333" d="M5 9h5v4H5z" /></svg>
          <FileName>florian-olivo-4hb....jpg</FileName>
          <ChevronUp size={15} color="#a9b3b8" />
          <ShelfRule />
          <ShowAll>Show All</ShowAll>
          <X size={14} color="#bdc5c9" />
        </Shelf>
      </Window>
      <Dock>
        {DOCK.map((d) =>
          d.rule ? <DockRule key={d.key} /> : (
            <DockSlot key={d.key}>
              {d.art}
              {d.run && <RunningDot />}
              {d.badge && <Badge>{d.badge}</Badge>}
            </DockSlot>
          )
        )}
      </Dock>
    </Desktop>
  );
}
